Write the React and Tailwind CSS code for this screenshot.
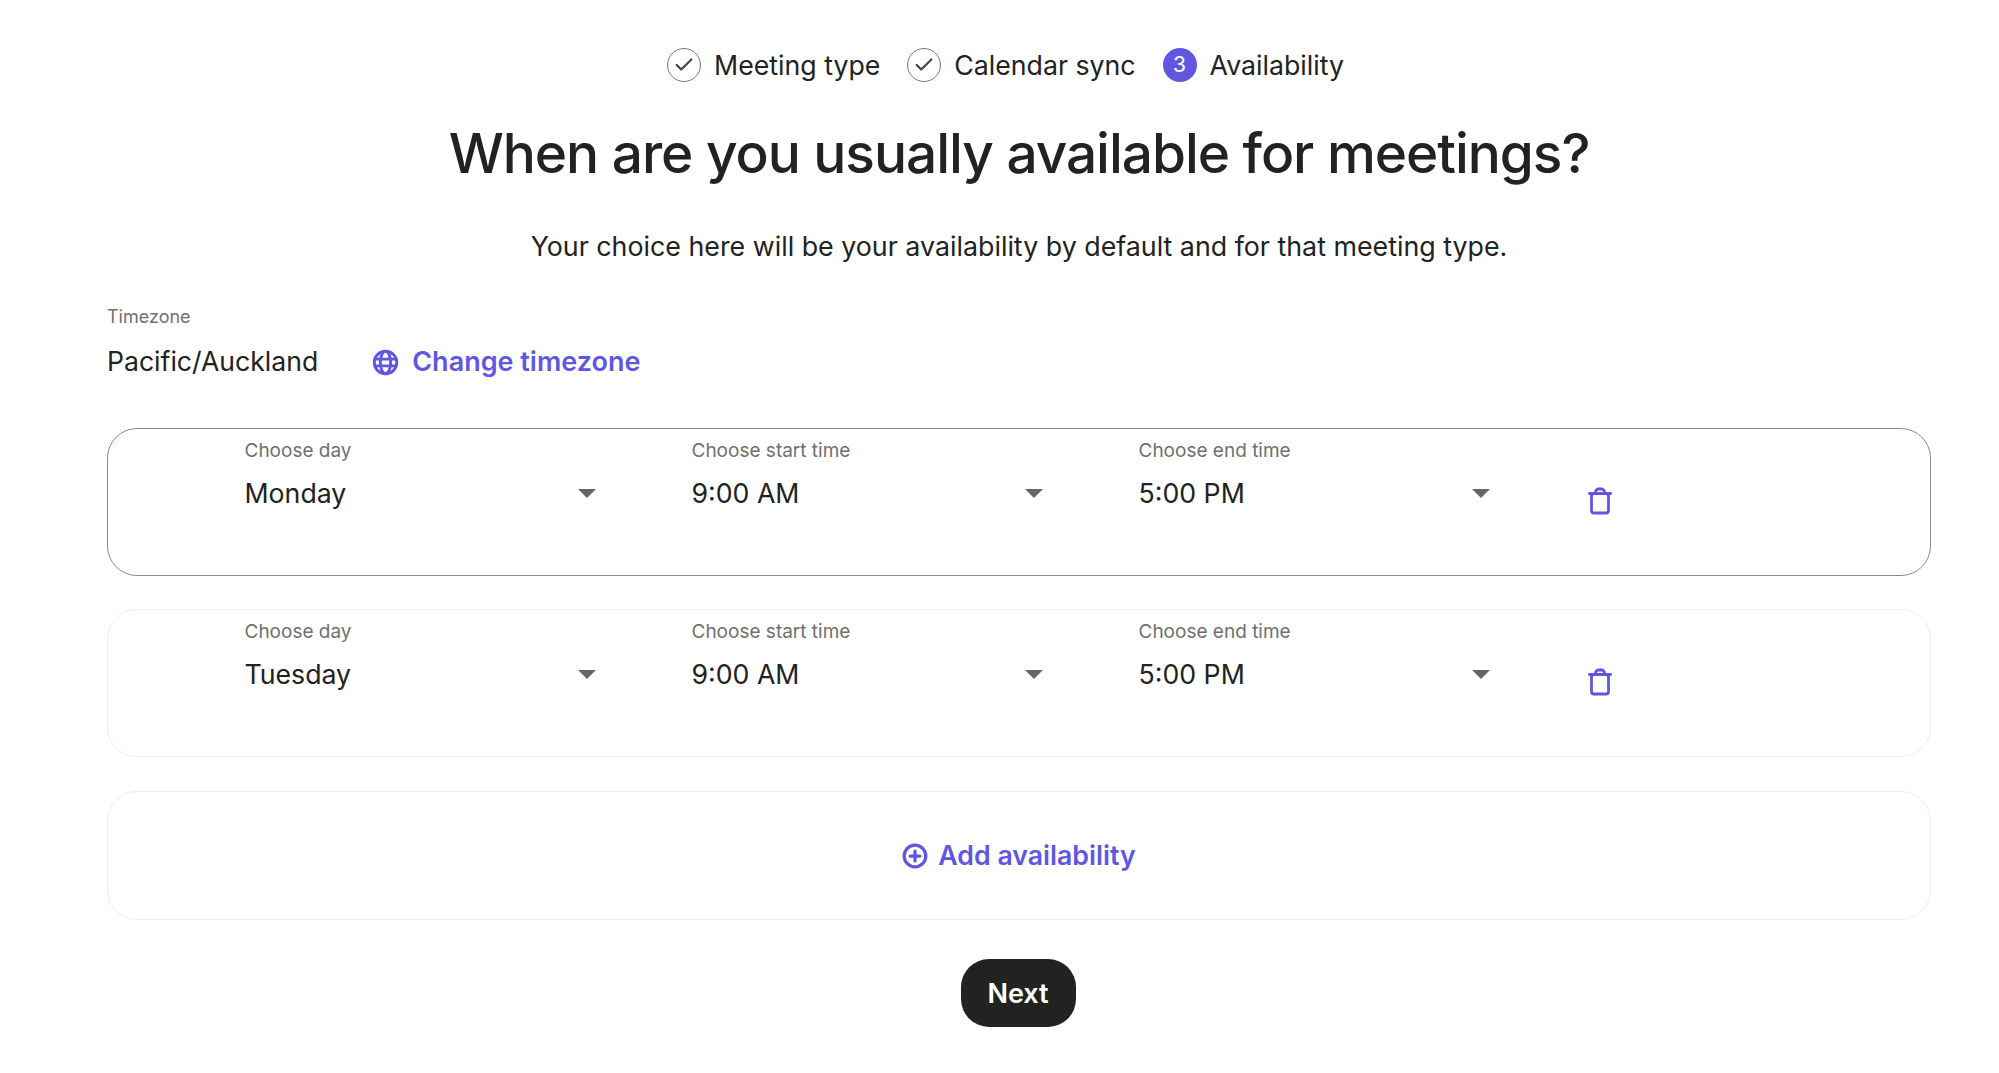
import { Check } from "lucide-react";

const purple = "text-[#5f57e0]";

const Step = ({ label, done, number }) => (
  <div className="flex items-center gap-[13px]">
    {done ? (
      <span className="w-[34px] h-[34px] rounded-full border border-[#7a7a7a] flex items-center justify-center text-[#444]">
        <Check size={22} strokeWidth={2.4} />
      </span>
    ) : (
      <span className="w-[34px] h-[34px] rounded-full bg-[#5f57e0] text-white text-[21px] flex items-center justify-center">
        {number}
      </span>
    )}
    <span className="text-[26.7px] leading-none text-[#222]">{label}</span>
  </div>
);

const TrashIcon = () => (
  <svg width="24" height="28" viewBox="0 0 24 28" fill="none" stroke="currentColor" strokeWidth="2.8" strokeLinecap="round" strokeLinejoin="round" className={`${purple} ml-[98px] mt-[47px]`}>
    <path d="M1.5 6.5h21" />
    <rect x="3.5" y="6.5" width="17" height="19.5" rx="2.5" />
    <path d="M7.5 6.5V5a3 3 0 0 1 3-3h3a3 3 0 0 1 3 3v1.5" />
  </svg>
);

const GlobeIcon = () => (
  <svg width="27" height="27" viewBox="0 0 24 24" fill="none" stroke="currentColor" strokeWidth="2.6">
    <circle cx="12" cy="12" r="10" />
    <ellipse cx="12" cy="12" rx="4.6" ry="10" />
    <path d="M2.5 9h19M2.5 15h19" />
  </svg>
);

const PlusIcon = () => (
  <svg width="26" height="26" viewBox="0 0 24 24" fill="none" stroke="currentColor" strokeWidth="3" strokeLinecap="round">
    <circle cx="12" cy="12" r="10" />
    <path d="M12 7.5v9M7.5 12h9" />
  </svg>
);

const Select = ({ label, value }) => (
  <div className="w-[351px]">
    <div className="text-[19px] leading-[22px] text-[#6f6f6f]">{label}</div>
    <div className="flex items-center justify-between mt-[15px] h-[32px]">
      <span className="text-[26.7px] leading-none text-[#222]">{value}</span>
      <span className="w-0 h-0 border-x-[9px] border-x-transparent border-t-[9px] border-t-[#666]" />
    </div>
  </div>
);

const Row = ({ day, active }) => (
  <div className={`h-[148px] rounded-[30px] border pl-[136.5px] pt-[11px] flex ${active ? "border-[#8a8a8a]" : "border-[#eeeeee]"}`}>
    <div className="flex gap-[96px]">
      <Select label="Choose day" value={day} />
      <Select label="Choose start time" value="9:00 AM" />
      <Select label="Choose end time" value="5:00 PM" />
    </div>
    <TrashIcon />
  </div>
);

export default function App() {
  return (
    <div className="min-h-[1073px] bg-white font-['Inter',sans-serif] pl-[107px] pr-[68px] pt-[48px]">
      <div className="flex justify-center gap-[27px] pr-[27px]">
        <Step label="Meeting type" done />
        <Step label="Calendar sync" done />
        <Step label="Availability" number={3} />
      </div>

      <h1 className="mt-[36px] text-center text-[55px] leading-[70px] font-medium text-[#222] tracking-[-0.019em]">
        When are you usually available for meetings?
      </h1>

      <p className="mt-[40px] text-center text-[26.8px] leading-[36px] text-[#222]">
        Your choice here will be your availability by default and for that meeting type.
      </p>

      <div className="mt-[42px] text-[18px] leading-[22px] text-[#6f6f6f]">Timezone</div>
      <div className="flex items-center mt-[16px] h-[36px]">
        <span className="text-[26.6px] text-[#222]">Pacific/Auckland</span>
        <button className={`flex items-center gap-[13px] ml-[54px] font-semibold text-[27px] ${purple}`}>
          <GlobeIcon />
          Change timezone
        </button>
      </div>

      <div className="mt-[48px] flex flex-col">
        <Row day="Monday" active />
        <div className="mt-[33px]">
          <Row day="Tuesday" />
        </div>
        <div className={`mt-[34px] h-[129px] rounded-[30px] border border-[#eeeeee] flex items-center justify-center gap-[10px] font-semibold text-[26.7px] ${purple}`}>
          <PlusIcon />
          Add availability
        </div>
      </div>

      <div className="flex justify-center mt-[39px] pr-[2px]">
        <button className="w-[115px] h-[68px] pt-[2px] rounded-[28px] bg-[#222] text-white text-[27px] font-semibold">Next</button>
      </div>
    </div>
  );
}
